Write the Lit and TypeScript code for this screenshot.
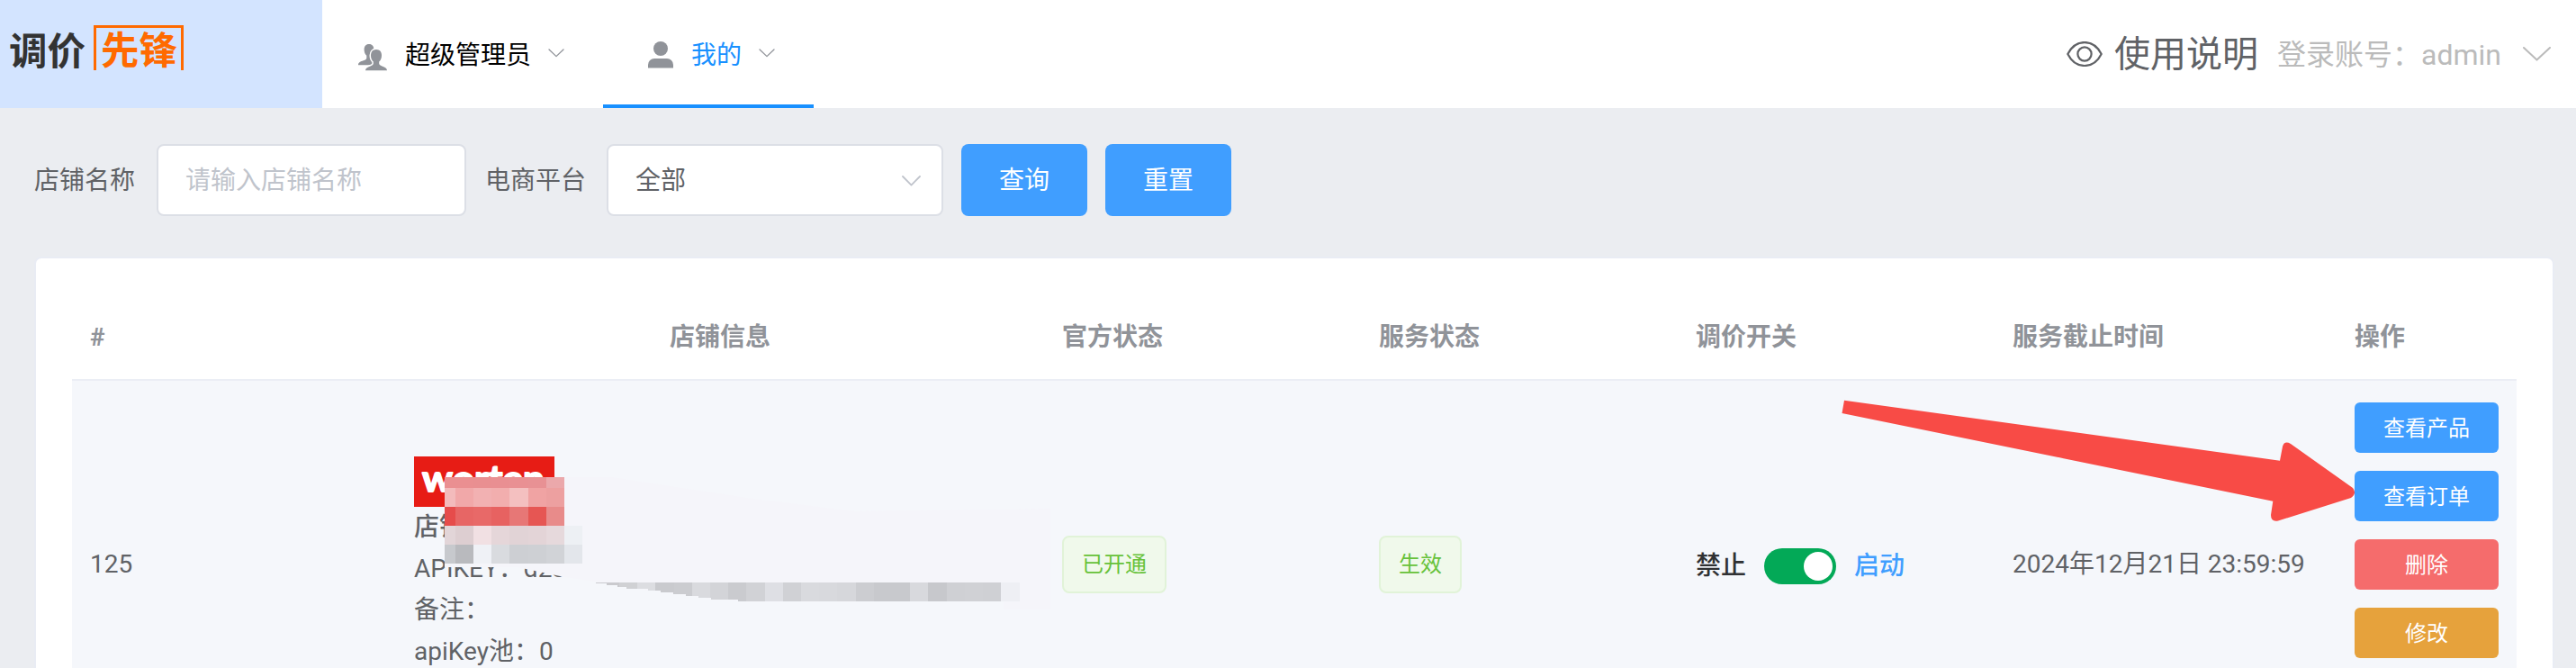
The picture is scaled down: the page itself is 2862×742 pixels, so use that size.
import { LitElement, html, svg, css } from "lit";
import { customElement } from "lit/decorators.js";

const chevron = (w: number, h: number, color: string, sw: number) => html`
  <svg width=${w} height=${h} viewBox="0 0 ${w} ${h}" fill="none">
    <path d="M1 1L${w / 2} ${h - 1.4}L${w - 1} 1" stroke=${color} stroke-width=${sw} stroke-linecap="round" stroke-linejoin="round" />
  </svg>`;

const usersIcon = html`
  <svg width="32" height="30" viewBox="0 0 32 30" fill="#909399">
    <path d="M12 0c3.6 0 5.4 2.6 5.4 6c0 3-1.200 5.300-3 6.800v2.400c0 1 .6 1.400 3 2.400L16 23.300H0c0-3 2.500-3.800 5.800-5c2.500-.9 3.500-1.500 3.500-3.100v-2.400C7.600 11.300 6.600 9 6.600 6C6.600 2.600 8.400 0 12 0z" />
    <path d="M20 6c4 0 6 2.800 6 6.500c0 3-1 5.500-2.800 7v2c0 1.300.8 2 3.300 2.900c3.500 1.300 5.500 2.300 5.500 4.900H8c0-2.600 2-3.600 5.500-4.900c2.500-.9 3.300-1.600 3.300-2.900v-2C15 18 14 15.500 14 12.500C14 8.800 16 6 20 6z" stroke="#fff" stroke-width="3" paint-order="stroke" />
  </svg>`;

const userIcon = html`
  <svg width="28" height="30" viewBox="0 0 28 30" fill="#909399">
    <circle cx="14" cy="8" r="8" />
    <path d="M0 29.500V26a7 7 0 0 1 7-7h14a7 7 0 0 1 7 7v3.500z" />
  </svg>`;

const eyeIcon = html`
  <svg width="40" height="28" viewBox="0 0 40 28" fill="none" stroke="#606266" stroke-width="2.200" stroke-linejoin="round">
    <path d="M1.300 14C10-3.300 30-3.300 38.700 14C30 31.300 10 31.300 1.300 14z" />
    <circle cx="20" cy="14" r="7.600" />
  </svg>`;

const mosaicX = [0, 12, 32, 52, 72, 93, 113, 133, 153];
const mosaicRows = [
  { y: 0, h: 12, c: ["#ea8f91", "#ea8f91", "#e98f91", "#e98f92", "#e99093", "#e89194", "#eba8ab"] },
  { y: 12, h: 21, c: ["#f3bbbc", "#f1a8a9", "#f2b1b2", "#f2aeae", "#f4c0c0", "#f0a3a3", "#eda0a0"] },
  { y: 33, h: 21, c: ["#e64c4b", "#e76665", "#e86968", "#e76261", "#e77776", "#e65653", "#e88b8a"] },
  { y: 54, h: 21, c: ["#e2d5d8", "#ddced1", "#f1e0e3", "#e5d6d9", "#e1d3d6", "#e3d4d7", "#e6d9dc", "#edf0f4"] },
  { y: 75, h: 21, c: ["#c7c9cd", "#b9babe", "#eff1f6", "#d9dbdf", "#cdcfd3", "#ced0d4", "#d1d3d7", "#e3e6eb"] },
];

const strip = [
  "#cbcbcf", "#cacace", "#d0d1d4", "#dcdde1", "#c9cace", "#cbccd0", "#d9dade", "#d3d4d8", "#cacbcf", "#d1d2d6", "#dedfe4",
  "#d0d1d5", "#d9dade", "#d8d9dd", "#d6d7db", "#cccdd1", "#c8c9cd", "#c8c9cd", "#d8d9dd", "#c7c8cc", "#cfd0d4", "#d0d1d5", "#cfd0d4", "#eeeff4",
];

@customElement("app-root")
export class AppRoot extends LitElement {
  static styles = css`
    :host {
      display: block;
      height: 742px;
      overflow: hidden;
      background: #ebedf1;
      color: #606266;
      font-family: Roboto, "Noto Sans CJK SC", sans-serif;
      font-size: 28px;
      line-height: 46px;
    }
    * { box-sizing: border-box; }
    svg { display: block; flex: none; }
    .header { display: flex; height: 120px; background: #fff; white-space: nowrap; }
    .brand { display: flex; align-items: flex-start; width: 358px; padding: 28px 0 0 10px; background: #d3e4ff; font-size: 42.500px; font-weight: 700; color: #333; }
    .brand-name { padding-top: 2px; line-height: 56px; }
    .boxed { height: 50px; margin-left: 9px; padding: 1px 4px 0 5px; border: 3px solid #ff6a00; border-bottom: 0; color: #ff6a00; line-height: 50px; }
    .nav { display: flex; flex: 1; }
    .item { display: flex; align-items: center; height: 120px; padding: 0 43px 0 40px; color: #000; }
    .item .label { margin: 0 19px 0 20px; padding-top: 3px; }
    .item.active { padding: 4px 43px 0 50px; border-bottom: 4px solid #1890ff; color: #1890ff; }
    .users { padding-top: 7px; }
    .person { padding-top: 2px; }
    .chev { padding-bottom: 2px; }
    .tools { display: flex; align-items: center; padding-right: 28px; }
    .guide { margin: 0 21px 0 13px; padding-top: 2px; font-size: 40px; }
    .account { margin-right: 24px; padding-top: 1px; font-size: 32px; color: #bbb; }
    .form { display: flex; align-items: center; padding: 40px 38px 0; }
    .field { display: flex; align-items: center; justify-content: space-between; height: 80px; padding: 2px 23px 0 30px; border: 2px solid #dcdfe6; border-radius: 8px; background: #fff; }
    .caption { padding-top: 1px; }
    .shop { width: 344px; margin: 0 21px 0 24px; color: #c0c4cc; }
    .platform { width: 374px; margin: 0 20px 0 23px; }
    .query { width: 140px; height: 80px; margin-right: 20px; border-radius: 8px; background: #409eff; color: #fff; line-height: 82px; text-align: center; }
    .card { height: 560px; margin: 45px 24px 0 38px; padding: 40px 40px 0; border: 2px solid #e9ecf4; border-radius: 8px; background: #fff; }
    .row { display: grid; grid-template-columns: 360px 720px 352px 352px 352px 380px 200px; align-items: center; }
    .row > div { padding: 2px 20px 0; white-space: nowrap; }
    .head { height: 96px; border-bottom: 2px solid #ebeef5; font-weight: 700; color: #909399; }
    .head .center { text-align: center; }
    .body { position: relative; height: 406px; background: #f5f7fb; }
    .info { display: flex; flex-direction: column; }
    .name { font-weight: 500; }
    .tag { display: inline-block; height: 64px; padding: 0 20px; border: 2px solid #e1f3d8; border-radius: 8px; background: #f0f9eb; color: #67c23a; font-size: 24px; line-height: 61px; vertical-align: middle; }
    .row > .toggle { display: flex; align-items: center; gap: 20px; padding-top: 6px; font-weight: 500; }
    .off { color: #303133; }
    .on { color: #409eff; }
    .switch { display: flex; justify-content: flex-end; width: 80px; height: 40px; padding: 4px; border-radius: 20px; background: #03a957; }
    .knob { width: 32px; height: 32px; border-radius: 50%; background: #fff; }
    .row > .ops { display: flex; flex-direction: column; gap: 20px; align-self: start; padding-top: 24px; }
    .op { height: 56px; border-radius: 6px; background: #409eff; color: #fff; font-size: 24px; line-height: 58px; text-align: center; }
    .op.danger { background: #f56c6c; }
    .op.warn { background: #e6a23c; }
    .mosaic { position: absolute; left: 410px; top: 100px; }
    .arrow { position: absolute; left: 1960px; top: 15px; }
  `;

  render() {
    return html`
      <div class="header">
        <div class="brand"><span class="brand-name">调价</span><span class="boxed">先锋</span></div>
        <div class="nav">
          <div class="item"><span class="users">${usersIcon}</span><span class="label">超级管理员</span><span class="chev">${chevron(18, 10, "#909399", 1.3)}</span></div>
          <div class="item active"><span class="person">${userIcon}</span><span class="label">我的</span><span class="chev">${chevron(18, 10, "#909399", 1.3)}</span></div>
        </div>
        <div class="tools">
          ${eyeIcon}<span class="guide">使用说明</span><span class="account">登录账号：admin</span>${chevron(31, 16, "#bbb", 2)}
        </div>
      </div>
      <div class="form">
        <span class="caption">店铺名称</span>
        <div class="field shop">请输入店铺名称</div>
        <span class="caption">电商平台</span>
        <div class="field platform"><span>全部</span>${chevron(21, 12, "#c0c4cc", 1.8)}</div>
        <div class="query">查询</div>
        <div class="query">重置</div>
      </div>
      <div class="card">
        <div class="row head">
          <div>#</div><div class="center">店铺信息</div><div>官方状态</div><div>服务状态</div><div>调价开关</div><div>服务截止时间</div><div>操作</div>
        </div>
        <div class="row body">
          <div>125</div>
          <div class="info">
            <svg width="156" height="56" viewBox="0 0 156 56">
              <rect width="156" height="56" fill="#e71c15" />
              <text x="9" y="39" textLength="136" lengthAdjust="spacingAndGlyphs" font-family="Lato" font-weight="700" font-size="40" fill="#fff" stroke="#fff" stroke-width="1.800" stroke-linejoin="round">worten</text>
            </svg>
            <span class="name">店铺</span>
            <span>APIKEY：d2s</span>
            <span>备注：</span>
            <span>apiKey池：0</span>
          </div>
          <div><span class="tag">已开通</span></div>
          <div><span class="tag">生效</span></div>
          <div class="toggle"><span class="off">禁止</span><span class="switch"><span class="knob"></span></span><span class="on">启动</span></div>
          <div>2024年12月21日 23:59:59</div>
          <div class="ops">
            <div class="op">查看产品</div>
            <div class="op">查看订单</div>
            <div class="op danger">删除</div>
            <div class="op warn">修改</div>
          </div>
          <svg class="mosaic" width="690" height="160" viewBox="490 523 690 160">
            <path d="M627 530H680L830 553L950 568L1167 565V677H1115V668H835L790 665L748 659L700 653L662 646L627 641L575 630H494V584H627z" fill="#f5f5fa" />
            <g transform="translate(494 530)" shape-rendering="crispEdges">
              ${mosaicRows.map((r) => r.c.map((c, i) => svg`<rect x=${mosaicX[i]} y=${r.y} width=${mosaicX[i + 1] - mosaicX[i]} height=${r.h} fill=${c} />`))}
            </g>
            <clipPath id="wedge"><path d="M662 646H1133V668H820V666H790V664H776V662H762V660H748V658H734V656H720V654H696V652H686V650H674V648H662z" /></clipPath>
            <g clip-path="url(#wedge)" shape-rendering="crispEdges">
              ${strip.map((c, i) => svg`<rect x=${647.5 + i * 20.2} y="647" width="20.400" height="20.500" fill=${c} />`)}
            </g>
          </svg>
          <svg class="arrow" width="580" height="150" viewBox="2040 438 580 150">
            <path d="M2049 444.700L2533 511.700L2536 496Q2538 489 2545 493L2614 542Q2619 548 2612 553L2531 578.500Q2523 580 2523 572L2525.300 556.700L2046.500 459z" fill="#f84b46" />
          </svg>
        </div>
      </div>
    `;
  }
}
